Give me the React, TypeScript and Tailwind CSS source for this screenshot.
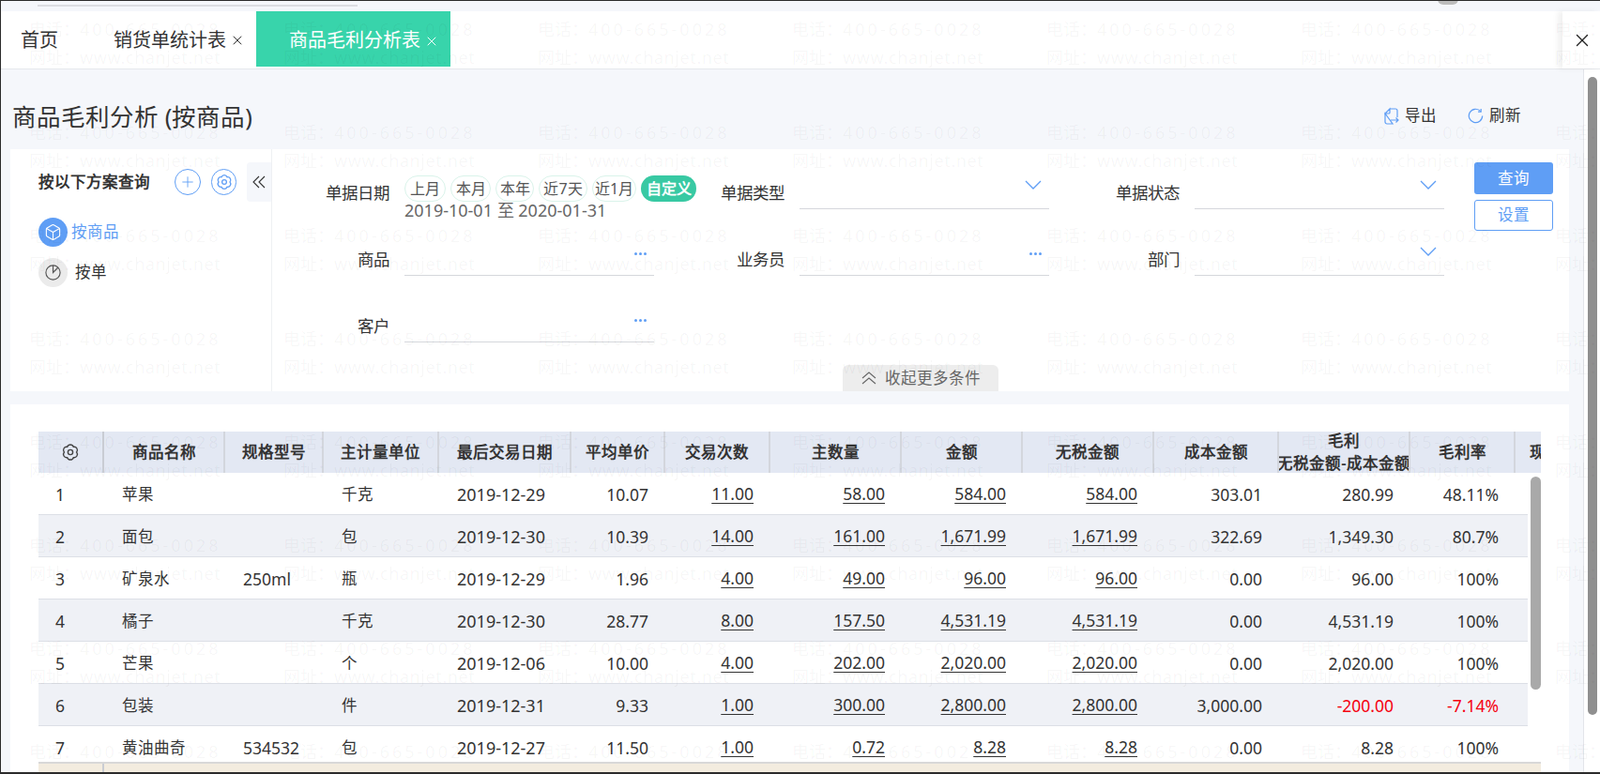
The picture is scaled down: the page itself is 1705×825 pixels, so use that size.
import * as React from "react"
import { Box, Plus, X } from "lucide-react"

const gridCols = "grid-cols-[70px_129px_105px_123px_141px_100px_112px_140px_129px_140px_133px_140px_112px_27px]"
const rowCols = "grid-cols-[70px_129px_105px_123px_141px_100px_112px_140px_129px_140px_133px_140px_112px_13px]"
const latin = "font-['Liberation_Sans','Noto_Sans_CJK_SC',sans-serif]"

const rows = [
  ["1", "苹果", "", "千克", "2019-12-29", "10.07", "11.00", "58.00", "584.00", "584.00", "303.01", "280.99", "48.11%"],
  ["2", "面包", "", "包", "2019-12-30", "10.39", "14.00", "161.00", "1,671.99", "1,671.99", "322.69", "1,349.30", "80.7%"],
  ["3", "矿泉水", "250ml", "瓶", "2019-12-29", "1.96", "4.00", "49.00", "96.00", "96.00", "0.00", "96.00", "100%"],
  ["4", "橘子", "", "千克", "2019-12-30", "28.77", "8.00", "157.50", "4,531.19", "4,531.19", "0.00", "4,531.19", "100%"],
  ["5", "芒果", "", "个", "2019-12-06", "10.00", "4.00", "202.00", "2,020.00", "2,020.00", "0.00", "2,020.00", "100%"],
  ["6", "包装", "", "件", "2019-12-31", "9.33", "1.00", "300.00", "2,800.00", "2,800.00", "3,000.00", "-200.00", "-7.14%"],
  ["7", "黄油曲奇", "534532", "包", "2019-12-27", "11.50", "1.00", "0.72", "8.28", "8.28", "0.00", "8.28", "100%"],
]

const headers = ["商品名称", "规格型号", "主计量单位", "最后交易日期", "平均单价", "交易次数", "主数量", "金额", "无税金额", "成本金额"]

const pills = [
  { label: "上月", width: "w-[44px]" },
  { label: "本月", width: "w-[43px]" },
  { label: "本年", width: "w-[41px]" },
  { label: "近7天", width: "w-[52px]" },
  { label: "近1月", width: "w-[47px]" },
]

const FlowerGear = ({ className }: { className?: string }) => (
  <svg viewBox="0 0 24 24" fill="none" stroke="currentColor" strokeWidth="1.4" className={className}>
    <path d="M18.6 12A3.5 3.5 0 0 1 15.3 17.7A3.5 3.5 0 0 1 8.7 17.7A3.5 3.5 0 0 1 5.4 12A3.5 3.5 0 0 1 8.7 6.3A3.5 3.5 0 0 1 15.3 6.3A3.5 3.5 0 0 1 18.6 12Z" />
    <circle cx="12" cy="12" r="2.6" />
  </svg>
)

const ChevronDown = () => (
  <svg viewBox="0 0 18 10" fill="none" stroke="#5f9ef5" strokeWidth="1.3" className="w-[18px] h-[10px]">
    <polyline points="1,1 9,9 17,1" />
  </svg>
)

const Dots = () => (
  <div className="flex gap-[2px]">
    <span className="w-[3px] h-[3px] rounded-full bg-[#5f9ef5]"></span>
    <span className="w-[3px] h-[3px] rounded-full bg-[#5f9ef5]"></span>
    <span className="w-[3px] h-[3px] rounded-full bg-[#5f9ef5]"></span>
  </div>
)

const Label = ({ text }: { text: string }) => (
  <div className="flex items-end justify-end pb-[6px] text-[17.5px] leading-[24px] text-[#333]">{text}</div>
)

const Field = ({ kind }: { kind: "select" | "dots" }) => (
  <div className={`flex items-end justify-end border-b border-[#d5d7dc] pr-[8px] ${kind === "select" ? "pb-[20px]" : "pb-[21px]"}`}>
    {kind === "select" ? <ChevronDown /> : <Dots />}
  </div>
)

const Watermark = () => (
  <div className="absolute inset-0 z-20 overflow-hidden pointer-events-none pl-[30px] grid grid-cols-[repeat(7,271px)] auto-rows-[110px]">
    {Array.from({ length: 56 }).map((_, i) => (
      <div key={i} className={`pt-[15px] text-[18px] leading-[30px] whitespace-nowrap text-black/[.04] ${latin}`}>
        <div>电话：<span className="tracking-[3px]">400-665-0028</span></div>
        <div>网址：<span className="tracking-[.6px]">www.chanjet.net</span></div>
      </div>
    ))}
  </div>
)

export default function App() {
  return (
    <div lang="zh-CN" className="relative w-[1705px] h-[825px] overflow-hidden flex flex-col bg-[#f5f7fb] border-t border-b-2 border-l border-[#2b2b2b] text-[#333] font-['Noto_Sans_CJK_SC',sans-serif]">
      {/* top strip behind the dialog */}
      <div className="relative h-[11px] shrink-0">
        <div className="ml-[39px] mt-[4px] w-[341px] h-[2px] bg-[#dcdde2]"></div>
        <div className="absolute -top-[8px] left-[1531px] w-[22px] h-[12px] rounded-full bg-[#bdbdbd]"></div>
      </div>

      {/* tabs */}
      <div className="relative h-[62px] shrink-0 bg-white border-b border-[#e6e8ec] flex items-start text-[20px] leading-[26px]">
        <div className="ml-[21px] mt-[18px]">首页</div>
        <div className="ml-[59px] mt-[18px] flex items-center">
          销货单统计表
          <X className="w-[16px] h-[16px] ml-[4px]" strokeWidth={1.5} />
        </div>
        <div className="ml-[12px] w-[207px] h-[59px] bg-[#38d4ab] text-white pl-[35px] pt-[18px] flex items-start">
          商品毛利分析表
          <X className="w-[16px] h-[16px] ml-[4px] mt-[6px]" strokeWidth={1.5} />
        </div>
        <div className="absolute right-0 top-0 w-[40px] h-[61px] bg-white shadow-[-5px_0_6px_rgba(0,0,0,0.06)] flex items-center justify-center pl-[2px]">
          <X className="w-[22px] h-[22px] text-[#222]" strokeWidth={1.5} />
        </div>
      </div>

      <div className="flex-1 min-h-0 flex">
        <div className="w-[1686px] flex flex-col">
          {/* title */}
          <div className="h-[85px] shrink-0 pl-[12px] pr-[66px] pt-[14px] flex items-center justify-between">
            <h1 className="text-[25.5px] leading-[34px]">商品毛利分析 (按商品)</h1>
            <div className="flex items-center text-[16.5px]">
              <svg viewBox="0 0 16 20" fill="none" stroke="#5f9ef5" strokeWidth="1.2" className="w-[16px] h-[20px]">
                <path d="M6 2h6a2 2 0 0 1 2 2v7M9 18H3a2 2 0 0 1-2-2V7Z M1 7l5-5v4a1 1 0 0 1-1 1Z" />
                <path d="M7 14h8M12.500 11.500 15 14l-2.500 2.500" />
              </svg>
              <span className="ml-[6px]">导出</span>
              <svg viewBox="0 0 18 18" fill="none" stroke="#5f9ef5" strokeWidth="1.3" className="ml-[33px] w-[17px] h-[17px]">
                <path d="M14.600 3.800A7.600 7.600 0 1 0 16.600 9" />
                <path d="M15 1v3.300h-3.300" />
              </svg>
              <span className="ml-[6px]">刷新</span>
            </div>
          </div>

          {/* filter panel */}
          <div className="ml-[10px] w-[1661px] h-[258px] shrink-0 bg-white flex">
            <div className="w-[279px] shrink-0 border-r border-[#eef0f3] pl-[30px] pt-[14px]">
              <div className="flex items-center h-[42px]">
                <span className="w-[116px] text-[16.5px] font-semibold whitespace-nowrap">按以下方案查询</span>
                <span className="ml-[29px] w-[28px] h-[28px] rounded-full border border-[#5f9ef5] flex items-center justify-center text-[#5f9ef5]">
                  <Plus className="w-[18px] h-[18px]" strokeWidth={1.2} />
                </span>
                <span className="ml-[11px] w-[28px] h-[28px] rounded-full border border-[#5f9ef5] flex items-center justify-center text-[#5f9ef5]">
                  <FlowerGear className="w-[22px] h-[22px]" />
                </span>
                <span className="ml-[11px] w-[26px] h-[42px] rounded-l-[4px] bg-[#f5f7fb] flex items-center justify-center">
                  <svg viewBox="0 0 14 14" fill="none" stroke="#333" strokeWidth="1.1" className="w-[14px] h-[14px]">
                    <polyline points="7,1 1,7 7,13" />
                    <polyline points="13,1 7,7 13,13" />
                  </svg>
                </span>
              </div>
              <div className="mt-[17px] flex items-center h-[31px]">
                <span className="w-[31px] h-[31px] rounded-full bg-[#5f9ef5] flex items-center justify-center">
                  <Box className="w-[19px] h-[19px] text-white" strokeWidth={1.4} />
                </span>
                <span className="ml-[4px] text-[16.5px] text-[#5f9ef5]">按商品</span>
              </div>
              <div className="mt-[12px] flex items-center h-[31px]">
                <span className="w-[31px] h-[31px] rounded-full bg-[#ebebeb] flex items-center justify-center">
                  <svg viewBox="0 0 20 20" fill="none" stroke="#555" strokeWidth="1.2" className="w-[19px] h-[19px]">
                    <circle cx="10" cy="10" r="8" />
                    <path d="M10 2v8l5.500-5.500" />
                  </svg>
                </span>
                <span className="ml-[8px] text-[16.5px]">按单</span>
              </div>
            </div>

            <div className="flex-1 flex flex-col">
              <div className="flex">
                <div className="grid grid-cols-[125px_266px_123px_266px_123px_266px] grid-rows-[64px_71px_71px] gap-x-4">
                  <Label text="单据日期" />
                  <div className="pt-[28px] text-[16px] text-[#555]">
                    <div className={`flex gap-[5px] whitespace-nowrap ${latin}`}>
                      {pills.map((p) => (
                        <span key={p.label} className={`h-[28px] ${p.width} shrink-0 text-center rounded-full border border-[#d9f3ea] leading-[26px]`}>{p.label}</span>
                      ))}
                      <span className="h-[28px] w-[59px] shrink-0 text-center rounded-full bg-[#38c9a3] text-white font-semibold leading-[28px]">自定义</span>
                    </div>
                    <div className={`${latin} text-[18px] leading-[20px] -mt-[1px] whitespace-nowrap text-[#666]`}>2019-10-01 至 2020-01-31</div>
                  </div>
                  <Label text="单据类型" />
                  <Field kind="select" />
                  <Label text="单据状态" />
                  <Field kind="select" />
                  <Label text="商品" />
                  <Field kind="dots" />
                  <Label text="业务员" />
                  <Field kind="dots" />
                  <Label text="部门" />
                  <Field kind="select" />
                  <Label text="客户" />
                  <Field kind="dots" />
                </div>
                <div className="ml-[32px] pt-[14px] w-[84px]">
                  <div className="h-[34px] rounded-[3px] bg-[#5f9ef5] text-white text-[16.5px] flex items-center justify-center">查询</div>
                  <div className="mt-[6px] h-[33px] rounded-[3px] border border-[#5f9ef5] text-[#5f9ef5] text-[16.5px] flex items-center justify-center">设置</div>
                </div>
              </div>
              <div className="mt-[24px] ml-[608px] w-[166px] h-[28px] rounded-t-[6px] bg-[#ededed] text-[#666] text-[16.5px] flex items-center justify-center gap-[9px]">
                <svg viewBox="0 0 16 14" fill="none" stroke="#666" strokeWidth="1.1" className="w-[16px] h-[14px]">
                  <polyline points="1,7 8,1 15,7" />
                  <polyline points="1,13 8,7 15,13" />
                </svg>
                收起更多条件
              </div>
            </div>
          </div>

          {/* table panel */}
          <div className="relative mt-[14px] ml-[10px] w-[1661px] flex-1 min-h-0 bg-white pt-[29px] pl-[30px] overflow-hidden">
            <div className={`w-[1601px] h-[44px] bg-[#e3e8f3] grid ${gridCols} text-[16.5px] font-semibold`}>
              <div className="flex items-center justify-center border-r-2 border-[#c9ccd3]">
                <FlowerGear className="w-[24px] h-[24px] text-[#444]" />
              </div>
              {headers.map((h) => (
                <div key={h} className="flex items-center justify-center border-r-2 border-[#d3d6dd] whitespace-nowrap overflow-hidden">{h}</div>
              ))}
              <div className="flex flex-col items-center justify-center border-r-2 border-[#d3d6dd] leading-[24px] whitespace-nowrap overflow-hidden">
                <span>毛利</span>
                <span>无税金额-成本金额</span>
              </div>
              <div className="flex items-center justify-center border-r-2 border-[#d3d6dd]">毛利率</div>
              <div className="flex items-center pl-[15px] overflow-hidden whitespace-nowrap">现金</div>
            </div>

            {rows.map((r, i) => (
              <div
                key={r[0]}
                className={`w-[1587px] grid ${rowCols} pt-[11px] text-[16.5px] leading-[24px] ${i === 6 ? "h-[38px]" : "h-[45px] border-b border-[#dcdfe6]"} ${i % 2 === 1 ? "bg-[#eff1f6]" : "bg-white"}`}
              >
                <div className={`pl-[18px] text-[17.5px] ${latin}`}>{r[0]}</div>
                <div className="pl-[19px]">{r[1]}</div>
                <div className={`pl-[19px] text-[17.5px] ${latin}`}>{r[2]}</div>
                <div className="pl-[19px]">{r[3]}</div>
                <div className={`pl-[19px] whitespace-nowrap text-[18px] ${latin}`}>{r[4]}</div>
                <div className={`pr-[18px] text-right text-[17.5px] ${latin}`}>{r[5]}</div>
                {r.slice(6, 10).map((v, j) => (
                  <div key={j} className={`pr-[18px] text-right -mt-[1px] text-[17.5px] ${latin}`}>
                    <span className="underline underline-offset-[3px] decoration-1">{v}</span>
                  </div>
                ))}
                <div className={`pr-[18px] text-right text-[17.5px] ${latin}`}>{r[10]}</div>
                <div className={`pr-[18px] text-right text-[17.5px] ${latin} ${r[11].startsWith("-") ? "text-[#f5000f]" : ""}`}>{r[11]}</div>
                <div className={`pr-[18px] text-right text-[17.5px] ${latin} ${r[12].startsWith("-") ? "text-[#f5000f]" : ""}`}>{r[12]}</div>
              </div>
            ))}

            <div className="w-[1601px] h-[12px] bg-[#f3ecdf] border-t-2 border-[#d8d8d8]">
              <div className="w-[70px] h-full border-r-2 border-[#c9ccd3]"></div>
            </div>

            {/* inner scrollbar */}
            <div className="absolute left-[1620px] top-[77px] w-[11px] h-[227px] rounded-full bg-[#a9a9a9]"></div>
          </div>
        </div>

        {/* page scrollbar */}
        <div className="w-[18px] border-l border-[#e3e5ea] bg-white pl-[4px] pt-[8px]">
          <div className="w-[10px] h-[680px] rounded-full bg-[#8f8f8f]"></div>
        </div>
      </div>

      <Watermark />
    </div>
  )
}
